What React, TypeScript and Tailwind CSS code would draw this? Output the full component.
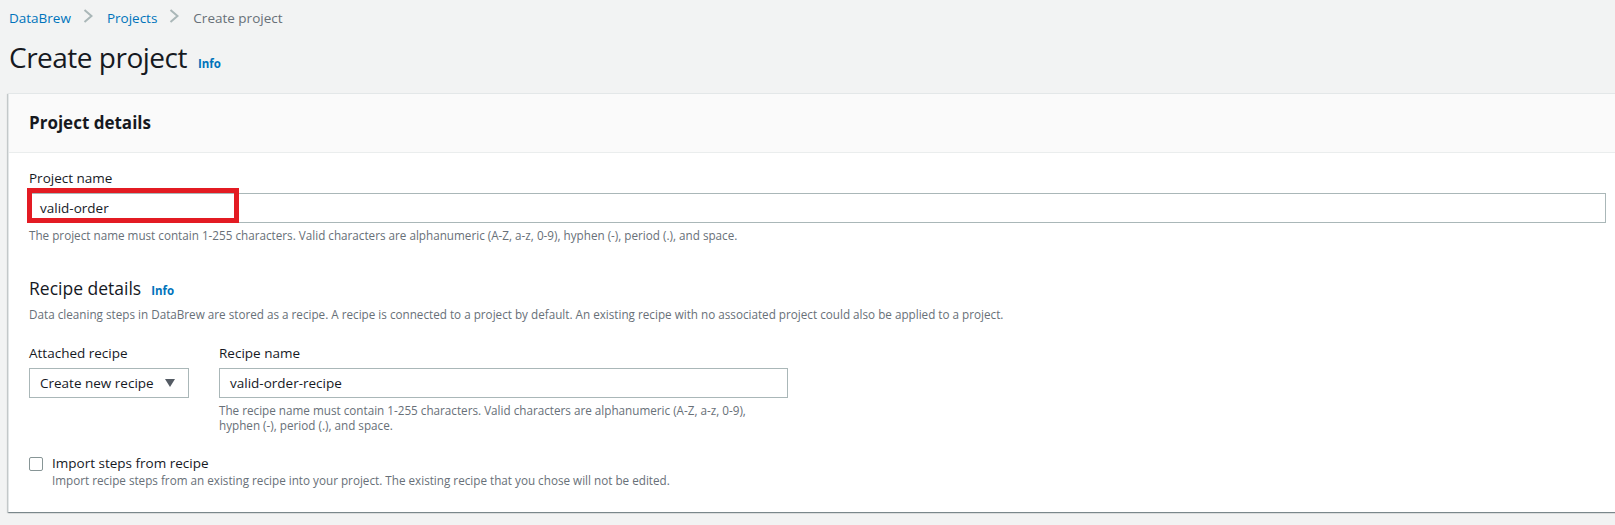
import React from "react";

function Chevron() {
  return (
    <svg width="10" height="14" viewBox="0 0 10 14" className="ml-[12px] mr-[14px]">
      <path d="M1.5 1 L8.5 7 L1.5 13" fill="none" stroke="#aab7b8" strokeWidth="2" />
    </svg>
  );
}

function Info({ className = "" }: { className?: string }) {
  return (
    <span className={`text-[11.5px] font-bold text-[#0073bb] ${className}`}>Info</span>
  );
}

export default function App() {
  return (
    <div
      className="h-[525px] w-[1615px] overflow-hidden bg-[#f2f3f3] text-[#16191f]"
      style={{ fontFamily: '"Open Sans", Arial, sans-serif' }}
    >
      {/* breadcrumb */}
      <div className="flex h-[27px] items-start pl-[9px] pt-[9px] text-[13.5px] leading-[18px]">
        <span className="text-[#0073bb]">DataBrew</span>
        <Chevron />
        <span className="text-[#0073bb]">Projects</span>
        <Chevron />
        <span className="text-[#687078]">Create project</span>
      </div>

      {/* title */}
      <div className="flex items-baseline pl-[9px] pt-[13px]">
        <h1 className="text-[28px] font-normal leading-[34px] tracking-[-0.5px]">Create project</h1>
        <Info className="ml-[11px]" />
      </div>

      {/* card */}
      <div className="ml-[8px] mt-[19px] w-[1618px] border-l border-t border-[#e3e7e8] bg-white shadow-[0_1px_1px_0_rgba(0,28,36,0.3),1px_1px_1px_0_rgba(0,28,36,0.15),-1px_1px_1px_0_rgba(0,28,36,0.15)]">
        <div className="flex h-[59px] items-center border-b border-[#eaeded] bg-[#fafafa] px-[20px]">
          <h2 className="text-[17px] font-bold leading-[22px]">Project details</h2>
        </div>

        <div className="px-[20px] pb-[24px] pt-[15px]">
          <label className="block text-[13.5px] leading-[20px]">Project name</label>
          <div className="relative mt-[5px] w-full">
            <div className="flex h-[30px] items-center border border-[#aab7b8] px-[10px] text-[13.5px]">
              valid-order
            </div>
            <div className="pointer-events-none absolute left-[-2px] top-[-5px] h-[35px] w-[212px] border-[5px] border-[#e31b23]" />
          </div>
          <p className="mt-[4px] text-[11.7px] leading-[16px] text-[#687078]">
            The project name must contain 1-255 characters. Valid characters are alphanumeric (A-Z, a-z, 0-9), hyphen (-), period (.), and space.
          </p>

          <div className="mt-[33px] flex items-baseline">
            <h3 className="text-[17.5px] font-normal leading-[24px]">Recipe details</h3>
            <Info className="ml-[10px]" />
          </div>
          <p className="mt-[6px] text-[11.7px] leading-[16px] text-[#687078]">
            Data cleaning steps in DataBrew are stored as a recipe. A recipe is connected to a project by default. An existing recipe with no associated project could also be applied to a project.
          </p>

          <div className="mt-[21px] flex gap-[30px]">
            <div className="w-[160px]">
              <label className="block text-[13.5px] leading-[20px]">Attached recipe</label>
              <div className="mt-[5px] flex h-[30px] items-center justify-between border border-[#aab7b8] pl-[10px] pr-[13px] text-[13.5px]">
                <span>Create new recipe</span>
                <svg width="10" height="8" viewBox="0 0 10 8">
                  <path d="M0 0 H10 L5 8 Z" fill="#545b64" />
                </svg>
              </div>
            </div>
            <div className="w-[569px]">
              <label className="block text-[13.5px] leading-[20px]">Recipe name</label>
              <div className="mt-[5px] flex h-[30px] items-center border border-[#aab7b8] px-[10px] text-[13.5px]">
                valid-order-recipe
              </div>
              <p className="mt-[5px] w-[540px] text-[11.7px] leading-[15px] text-[#687078]">
                The recipe name must contain 1-255 characters. Valid characters are alphanumeric (A-Z, a-z, 0-9), hyphen (-), period (.), and space.
              </p>
            </div>
          </div>

          <div className="mt-[22px] flex gap-[9px]">
            <div className="mt-[2px] h-[14px] w-[14px] shrink-0 rounded-[2px] border border-[#879596] bg-white" />
            <div>
              <div className="text-[13.5px] leading-[16px]">Import steps from recipe</div>
              <p className="mt-[1px] text-[11.7px] leading-[16px] text-[#687078]">
                Import recipe steps from an existing recipe into your project. The existing recipe that you chose will not be edited.
              </p>
            </div>
          </div>
        </div>
      </div>
    </div>
  );
}
